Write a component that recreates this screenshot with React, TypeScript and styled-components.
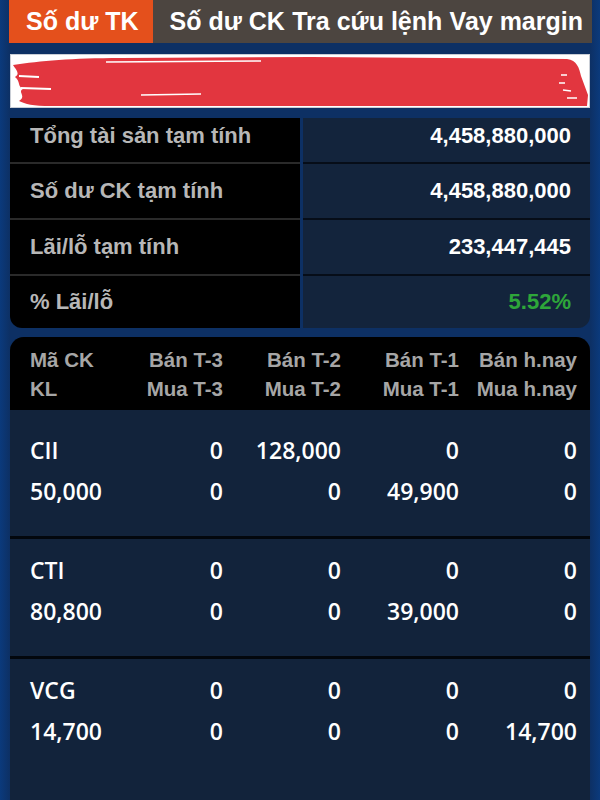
import React from "react";
import styled, { createGlobalStyle } from "styled-components";

const GlobalStyle = createGlobalStyle`
  html, body { margin: 0; padding: 0; background: #0d3266; }
  #root { min-height: 800px; }
`;

const Page = styled.div`
  width: 600px;
  min-height: 800px;
  box-sizing: border-box;
  padding: 0 10px;
  background: linear-gradient(90deg, #0b3a7c 0, #0d3064 10px, #0d3064 590px, #0b3a7c 600px);
  display: flex;
  flex-direction: column;
  font-family: "Liberation Sans", Arial, sans-serif;
`;

const TabBar = styled.nav`
  display: flex;
  height: 43px;
  margin: 0 -2px 0 -1px;
  background: #4c4540;
`;

const Tab = styled.div<{ $active?: boolean }>`
  display: flex;
  align-items: center;
  height: 100%;
  padding: ${(p) => (p.$active ? "0 14px 0 17px" : "0")};
  background: ${(p) => (p.$active ? "#e4501c" : "transparent")};
  color: #fff;
  font-size: 25px;
  font-weight: bold;
  white-space: nowrap;
`;

const TabGroup = styled.div`
  flex: 1;
  display: flex;
  justify-content: space-between;
  align-items: center;
  padding: 0 9px 0 17px;
`;

const AccountBox = styled.div`
  margin-top: 11px;
  height: 54px;
  box-sizing: border-box;
  background: #fff;
  border: 1px solid #c9ced6;
  overflow: hidden;
  svg { display: block; }
`;

const Summary = styled.div`
  margin-top: 10px;
  display: grid;
  grid-template-columns: 290px 1fr;
  column-gap: 3px;
`;

const LabelCell = styled.div<{ $h: number; $pb: number; $last?: boolean }>`
  height: ${(p) => p.$h}px;
  box-sizing: border-box;
  display: flex;
  align-items: center;
  padding: 0 0 ${(p) => p.$pb}px 20px;
  background: #000;
  color: #b7b7b7;
  font-size: 22px;
  font-weight: bold;
  border-bottom: ${(p) => (p.$last ? "none" : "2px solid #2a2a2a")};
  border-bottom-left-radius: ${(p) => (p.$last ? "12px" : "0")};
`;

const ValueCell = styled.div<{ $h: number; $pb: number; $last?: boolean; $green?: boolean }>`
  height: ${(p) => p.$h}px;
  box-sizing: border-box;
  display: flex;
  align-items: center;
  justify-content: flex-end;
  padding: 0 19px ${(p) => p.$pb}px 0;
  background: #13243c;
  color: ${(p) => (p.$green ? "#2ea63a" : "#fff")};
  font-size: 22px;
  font-weight: bold;
  border-bottom: ${(p) => (p.$last ? "none" : "2px solid #060d18")};
  border-bottom-right-radius: ${(p) => (p.$last ? "12px" : "0")};
`;

const Holdings = styled.div`
  margin-top: 9px;
  flex: 1;
  background: #12233b;
  border-radius: 14px 14px 0 0;
  overflow: hidden;
`;

const gridCols = `
  display: grid;
  grid-template-columns: 1fr 118px 118px 118px 118px;
  padding: 0 13px 0 20px;
`;

const HeaderRow = styled.div`
  ${gridCols}
  background: #000;
  padding-top: 8px;
  padding-bottom: 7px;
`;

const HeadCell = styled.div<{ $left?: boolean }>`
  display: flex;
  flex-direction: column;
  align-items: ${(p) => (p.$left ? "flex-start" : "flex-end")};
  color: #a6a6a6;
  font-size: 20.5px;
  font-weight: bold;
  line-height: 29px;
  white-space: nowrap;
`;

const Group = styled.div<{ $first?: boolean }>`
  ${gridCols}
  padding-top: ${(p) => (p.$first ? "20px" : "11px")};
  padding-bottom: 24px;
  border-top: ${(p) => (p.$first ? "none" : "3px solid #03070d")};
`;

const DataCell = styled.div<{ $left?: boolean }>`
  display: flex;
  flex-direction: column;
  align-items: ${(p) => (p.$left ? "flex-start" : "flex-end")};
  color: #fff;
  font-family: "Open Sans", "DejaVu Sans", sans-serif;
  font-size: 23px;
  font-weight: 600;
  line-height: 41px;
  white-space: nowrap;
`;

const summary = [
  { label: "Tổng tài sản tạm tính", value: "4,458,880,000", h: 46, pb: 8 },
  { label: "Số dư CK tạm tính", value: "4,458,880,000", h: 56, pb: 0 },
  { label: "Lãi/lỗ tạm tính", value: "233,447,445", h: 56, pb: 0 },
  { label: "% Lãi/lỗ", value: "5.52%", h: 52, pb: 0, green: true },
];

const headers: [string, string][] = [
  ["Mã CK", "KL"],
  ["Bán T-3", "Mua T-3"],
  ["Bán T-2", "Mua T-2"],
  ["Bán T-1", "Mua T-1"],
  ["Bán h.nay", "Mua h.nay"],
];

const rows: [string, string][][] = [
  [["CII", "50,000"], ["0", "0"], ["128,000", "0"], ["0", "49,900"], ["0", "0"]],
  [["CTI", "80,800"], ["0", "0"], ["0", "0"], ["0", "39,000"], ["0", "0"]],
  [["VCG", "14,700"], ["0", "0"], ["0", "0"], ["0", "0"], ["0", "14,700"]],
];

const Redaction = () => (
  <svg width="578" height="52" viewBox="0 0 578 52">
    <path
      d="M2,10 C30,6 60,3 110,3 L300,2 L556,4 C566,5 568,13 570,21 L577,40 L576,51 L40,51 C22,51 14,49 8,46 C16,41 6,37 12,34 C6,31 10,27 4,22 C10,18 4,14 2,10 Z"
      fill="#e2363f"
    />
    <path d="M95,7 L250,6" stroke="#fff" strokeWidth="1.5" fill="none" />
    <path d="M130,40 L190,39" stroke="#fff" strokeWidth="1.5" fill="none" />
    <path d="M8,21 L28,22 M10,33 L40,34" stroke="#fff" strokeWidth="2" fill="none" />
    <path d="M550,20 L556,20 M548,28 L554,28 M552,35 L560,36 M556,43 L566,43" stroke="#fff" strokeWidth="1.5" fill="none" />
  </svg>
);

export default function App() {
  return (
    <>
      <GlobalStyle />
      <Page>
        <TabBar>
          <Tab $active>Số dư TK</Tab>
          <TabGroup>
            <Tab>Số dư CK</Tab>
            <Tab>Tra cứu lệnh</Tab>
            <Tab>Vay margin</Tab>
          </TabGroup>
        </TabBar>
        <AccountBox>
          <Redaction />
        </AccountBox>
        <Summary>
          {summary.map((r, i) => (
            <React.Fragment key={r.label}>
              <LabelCell $h={r.h} $pb={r.pb} $last={i === summary.length - 1}>
                {r.label}
              </LabelCell>
              <ValueCell $h={r.h} $pb={r.pb} $last={i === summary.length - 1} $green={r.green}>
                {r.value}
              </ValueCell>
            </React.Fragment>
          ))}
        </Summary>
        <Holdings>
          <HeaderRow>
            {headers.map((h, i) => (
              <HeadCell key={i} $left={i === 0}>
                <span>{h[0]}</span>
                <span>{h[1]}</span>
              </HeadCell>
            ))}
          </HeaderRow>
          {rows.map((row, gi) => (
            <Group key={gi} $first={gi === 0}>
              {row.map((c, ci) => (
                <DataCell key={ci} $left={ci === 0}>
                  <span>{c[0]}</span>
                  <span>{c[1]}</span>
                </DataCell>
              ))}
            </Group>
          ))}
        </Holdings>
      </Page>
    </>
  );
}
